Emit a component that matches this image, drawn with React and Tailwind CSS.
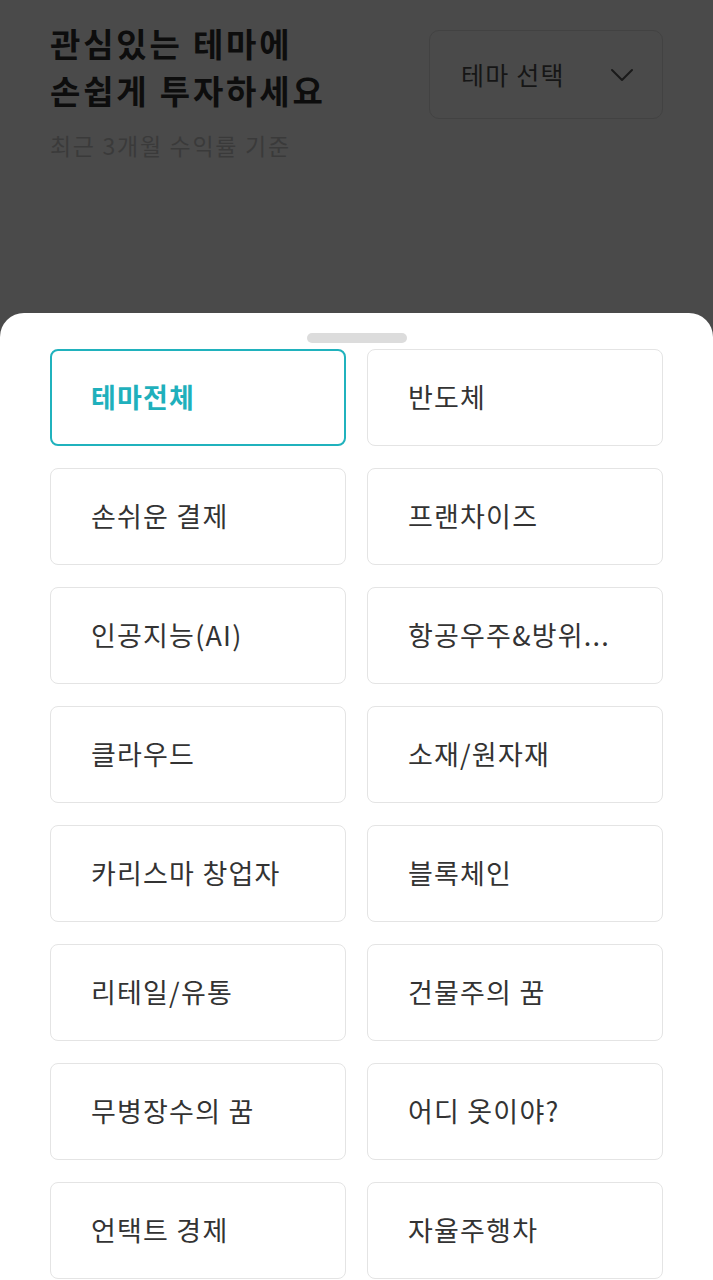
const themes = [
  "테마전체",
  "반도체",
  "손쉬운 결제",
  "프랜차이즈",
  "인공지능(AI)",
  "항공우주&방위...",
  "클라우드",
  "소재/원자재",
  "카리스마 창업자",
  "블록체인",
  "리테일/유통",
  "건물주의 꿈",
  "무병장수의 꿈",
  "어디 옷이야?",
  "언택트 경제",
  "자율주행차",
];

const ChevronDown = () => (
  <svg width="24" height="14" viewBox="0 0 24 14" fill="none">
    <path d="M2 2l10 10L22 2" stroke="#1a1a1a" strokeWidth="2" strokeLinecap="round" strokeLinejoin="round" />
  </svg>
);

const App = () => {
  const selected = 0;

  return (
    <div
      className="relative w-[713px] h-[1280px] overflow-hidden bg-[#4a4a4a]"
      style={{ fontFamily: '"Noto Sans CJK KR", "Noto Sans", sans-serif' }}
    >
      {/* dimmed header behind the sheet */}
      <div className="h-[313px] px-[50px] pt-[20px] flex justify-between items-start">
        <div>
          <h1 className="text-[33px] leading-[47px] font-semibold text-[#0d0d0d] tracking-[2.8px]">
            관심있는 테마에
            <br />
            손쉽게 투자하세요
          </h1>
          <p className="mt-[16px] text-[23px] leading-[30px] text-[#3a3a3a] tracking-[1.7px]">최근 3개월 수익률 기준</p>
        </div>
        <div className="mt-[10px] w-[234px] h-[89px] rounded-[10px] border border-[#424242] flex items-center justify-between pl-[31px] pr-[28px]">
          <span className="text-[25px] text-[#161616] tracking-[1.2px]">테마 선택</span>
          <ChevronDown />
        </div>
      </div>

      {/* bottom sheet */}
      <div className="bg-white rounded-t-[24px] h-[1000px] px-[50px] pt-[20px]">
        <div className="mx-auto w-[100px] h-[10px] rounded-full bg-[#dcdcdc]" />
        <div className="mt-[6px] grid grid-cols-2 gap-x-[21px] gap-y-[22px]">
          {themes.map((name, i) => (
            <div
              key={name}
              className={
                i === selected
                  ? "h-[97px] rounded-[8px] border-2 border-[#20b2bd] flex items-center pl-[39px]"
                  : "h-[97px] rounded-[8px] border-[1.5px] border-[#e4e4e4] flex items-center pl-[40px]"
              }
            >
              <span
                className={
                  i === selected
                    ? "text-[27px] font-bold text-[#1fb0bc] tracking-[1.2px] whitespace-nowrap"
                    : "text-[27px] text-[#333333] tracking-[1.2px] whitespace-nowrap"
                }
              >
                {name}
              </span>
            </div>
          ))}
        </div>
      </div>
    </div>
  );
};

export default App;
